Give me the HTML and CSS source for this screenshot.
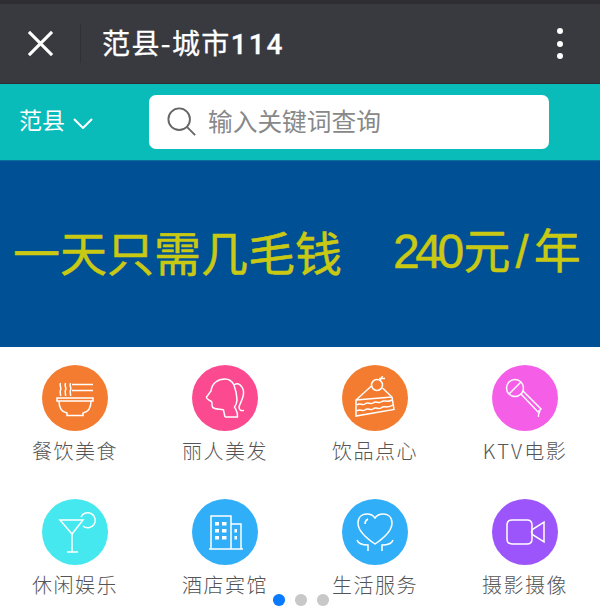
FILE: index.html
```html
<!DOCTYPE html>
<html lang="zh-CN">

<head>
    <meta charset="UTF-8">
    <meta name="viewport" content="width=device-width, initial-scale=1.0">
    <title>范县-城市114</title>

    <link rel="stylesheet" href="styles.css">
</head>

<body>

    <header class="topbar">
        <svg class="close-icon" viewBox="0 0 28 28">
            <path d="M2 2 L26 26 M26 2 L2 26"></path>
        </svg>
        <span class="divider"></span>
        <h1 class="title">范县-城市<b>114</b></h1>
        <div class="more">
            <span></span>
            <span></span>
            <span></span>
        </div>
    </header>

    <section class="searchbar">
        <div class="city">
            <span class="city-name">范县</span>
            <svg class="chevron" viewBox="0 0 20 11">
                <path d="M1 1 L10 10 L19 1"></path>
            </svg>
        </div>
        <div class="searchbox">
            <svg class="search-icon" viewBox="0 0 32 32">
                <circle cx="13" cy="13" r="11.5"></circle>
                <path d="M21.5 21.5 L30 30"></path>
            </svg>
            <span class="placeholder">输入关键词查询</span>
        </div>
    </section>

    <section class="banner">
        <div class="banner-text">
            <span class="banner-left">一天只需几毛钱</span>
            <span class="banner-right"><span class="num">240</span>元<span class="slash">/</span>年</span>
        </div>
    </section>

    <section class="menu">
        <div class="item">
            <div class="circle orange">
                <svg viewBox="0 0 66 66">
                    <path d="M15 33 H51 V36 H15 Z"></path>
                    <path d="M17 36 C17 43 20 47 25 48 V50.5 H41 V48 C46 47 49 43 49 36"></path>
                    <path d="M30 19.5 H51 M30 25.5 H51"></path>
                    <path d="M18.5 18 C17 21 20 23 18.5 25 C17.5 27 19 29 18.5 31"></path>
                    <path d="M23.5 18 C22 21 25 23 23.5 25 C22.5 27 24 29 23.5 31"></path>
                    <path d="M28.5 18 C27 21 30 23 28.5 25 C27.5 27 29 29 28.5 31"></path>
                </svg>
            </div>
            <p>餐饮美食</p>
        </div>
        <div class="item">
            <div class="circle pink">
                <svg viewBox="0 0 66 66">
                    <path d="M33 52 L31.5 45 C28 44 22 44.5 20.5 42 C19.5 40 20.5 37.5 19.5 36.5 C18 35.5 14 34 14.5 32 L19 26 C20 18 26 14 33 14 C37 14 40 16 42 20 C46 17 50 20 51.5 26 C52.5 32 48 38 47 42 C47 45 49 46 52 45.5"></path>
                    <path d="M33 52 H45.5 C46 47 44 45 42.5 42 C46 38 45 33 44 27 L42 20"></path>
                </svg>
            </div>
            <p>丽人美发</p>
        </div>
        <div class="item">
            <div class="circle orange">
                <svg viewBox="0 0 66 66">
                    <circle cx="35" cy="20" r="5.5"></circle>
                    <path d="M38 15.5 L40.5 11 M37 13.5 H43"></path>
                    <path d="M30 20.5 L14 35 L14 51 L52 44.5 L50 32 L40.5 23"></path>
                    <path d="M14 35 L50 32"></path>
                    <path d="M15 40 C18 37 20 41 23 39 C26 36 28 40 31 38 C34 35 36 39 39 37 C42 34 45 38 50 35"></path>
                    <path d="M15 46 C18 43 20 47 23 45 C26 42 28 46 31 44 C34 41 36 45 39 43 C42 40 45 44 51 40"></path>
                </svg>
            </div>
            <p>饮品点心</p>
        </div>
        <div class="item">
            <div class="circle violet">
                <svg viewBox="0 0 66 66">
                    <circle cx="23" cy="23" r="8.5"></circle>
                    <path d="M17 29 L29 17"></path>
                    <path d="M29 29 L46 47 L49 44 L31 26"></path>
                    <path d="M48 46 C47 48 46 49 46.5 52"></path>
                </svg>
            </div>
            <p><span class="latin">KTV</span>电影</p>
        </div>
        <div class="item">
            <div class="circle cyan">
                <svg viewBox="0 0 66 66">
                    <path d="M18 21 H41 L30 35 Z"></path>
                    <path d="M30 35 V53 M25 53 H36"></path>
                    <path d="M39 18 A7.5 7.5 0 1 1 41 27"></path>
                </svg>
            </div>
            <p>休闲娱乐</p>
        </div>
        <div class="item">
            <div class="circle blue">
                <svg viewBox="0 0 66 66">
                    <path d="M19 50 V17 H39 V50"></path>
                    <path d="M39 25 H49 V50"></path>
                    <path d="M17 50 H51"></path>
                    <g class="fill">
                        <rect x="23" y="23" width="4" height="3.5"></rect>
                        <rect x="30" y="23" width="4.5" height="3.5"></rect>
                        <rect x="23" y="30" width="4" height="3.5"></rect>
                        <rect x="30" y="30" width="4.5" height="3.5"></rect>
                        <rect x="23" y="37" width="4" height="3.5"></rect>
                        <rect x="30" y="37" width="4.5" height="3.5"></rect>
                        <rect x="42.5" y="30" width="2.5" height="3.5"></rect>
                        <rect x="42.5" y="37" width="2.5" height="3.5"></rect>
                    </g>
                </svg>
            </div>
            <p>酒店宾馆</p>
        </div>
        <div class="item">
            <div class="circle blue">
                <svg viewBox="0 0 66 66">
                    <path d="M33 45 C27 41 16 33 16 24 C16 18 20 15 25 15 C28 15 31 16 33 19 C35 16 38 15 41 15 C46 15 50 18 50 24 C50 33 39 41 33 45 Z"></path>
                    <path d="M23 25 C23 23 24 21 26 20"></path>
                    <path d="M15 41 C16 44 20 46 26 46 V52"></path>
                    <path d="M51 41 C50 44 46 46 40 46 V52"></path>
                </svg>
            </div>
            <p>生活服务</p>
        </div>
        <div class="item">
            <div class="circle purple">
                <svg viewBox="0 0 66 66">
                    <path d="M20 21 H35 Q40 21 40 26 V40 Q40 45 35 45 H20 Q15 45 15 40 V26 Q15 21 20 21 Z"></path>
                    <path d="M52 23 V43 L41 36 Q38 33 41 30 Z"></path>
                </svg>
            </div>
            <p>摄影摄像</p>
        </div>
    </section>

    <div class="dots">
        <span class="active"></span>
        <span></span>
        <span></span>
    </div>

</body>

</html>
```

FILE: styles.css
```css
* {
    padding: 0;
    margin: 0;
    box-sizing: border-box;
}

body {
    position: relative;
    height: 612px;
    overflow: hidden;
    background-color: #fff;
    font-family: "Noto Sans CJK SC", "Noto Sans", sans-serif;
}

svg {
    display: block;
    fill: none;
}

.topbar {
    height: 84px;
    display: flex;
    align-items: center;
    padding-left: 27px;
    background-color: #393a3f;
    border-top: 4px solid #2f2f33;
    border-bottom: 1px solid #2f2f33;
}

.close-icon {
    width: 27px;
    height: 27px;
    stroke: #fff;
    stroke-width: 3.2;
}

.divider {
    width: 1px;
    height: 39px;
    margin-left: 26px;
    background-color: #303136;
}

.title {
    margin-left: 21px;
    margin-top: -4px;
    font-size: 28px;
    font-weight: 400;
    letter-spacing: 1.4px;
    color: #fff;
    -webkit-text-stroke: 0.3px #fff;
}

.title b {
    font-family: Roboto, sans-serif;
    font-weight: 500;
    letter-spacing: 2px;
}

.more {
    margin-left: auto;
    margin-right: 37px;
    display: flex;
    flex-direction: column;
    gap: 6.6px;
}

.more span {
    width: 6px;
    height: 6px;
    border-radius: 50%;
    background-color: #fff;
}

.searchbar {
    height: 76px;
    display: flex;
    align-items: center;
    padding-left: 19px;
    background-color: #0abcb9;
}

.city {
    width: 130px;
    display: flex;
    align-items: center;
    gap: 8px;
    font-size: 23px;
    color: #fff;
}

.city-name {
    margin-top: -6px;
}

.chevron {
    width: 20px;
    height: 11px;
    margin-top: 2px;
    stroke: #fff;
    stroke-width: 2;
}

.searchbox {
    width: 400px;
    height: 54px;
    display: flex;
    align-items: center;
    padding-left: 18px;
    gap: 11px;
    background-color: #fff;
    border-radius: 7px;
    font-size: 24.7px;
    color: #888;
}

.placeholder {
    margin-top: -4px;
}

.search-icon {
    width: 30px;
    height: 30px;
    stroke: #666;
    stroke-width: 2;
}

.banner {
    height: 187px;
    display: flex;
    align-items: center;
    padding-left: 13px;
    background-color: #005096;
    border-top: 1px solid #0a6f9c;
    color: #c9c913;
    line-height: 1;
}

.banner-text {
    display: flex;
    align-items: center;
    margin-top: -8px;
    font-size: 47px;
    -webkit-text-stroke: 0.5px #c9c913;
}

.banner-right {
    margin-left: 51px;
}

.num {
    margin-right: 4px;
    font-family: "Liberation Sans", sans-serif;
    font-size: 48px;
    letter-spacing: -4.5px;
}

.slash {
    padding: 0 5px;
    font-family: "Liberation Sans", sans-serif;
    font-size: 47px;
}

.menu {
    display: grid;
    grid-template-columns: repeat(4, 150px);
    grid-auto-rows: 133.5px;
    padding-top: 18px;
}

.item {
    display: flex;
    flex-direction: column;
    align-items: center;
}

.circle {
    width: 66px;
    height: 66px;
    border-radius: 50%;
}

.circle svg {
    width: 66px;
    height: 66px;
    stroke: #fff;
    stroke-width: 1.5;
}

.circle .fill {
    fill: #fff;
    stroke: none;
}

.orange {
    background-color: #f47c30;
}

.pink {
    background-color: #fb4a8f;
}

.violet {
    background-color: #f55fe8;
}

.cyan {
    background-color: #45e8ee;
}

.blue {
    background-color: #30aef8;
}

.purple {
    background-color: #9c55fb;
}

.item p {
    margin-top: 5px;
    font-size: 20px;
    line-height: 30px;
    font-weight: 300;
    letter-spacing: 1.5px;
    color: #555;
    white-space: nowrap;
}

.latin {
    letter-spacing: 2.2px;
}

.dots {
    position: absolute;
    top: 594px;
    left: 273px;
    display: flex;
    align-items: center;
    gap: 10.5px;
}

.dots span {
    width: 11.5px;
    height: 11.5px;
    border-radius: 50%;
    background-color: #c8c8c8;
}

.dots .active {
    background-color: #0a7bff;
}
```
